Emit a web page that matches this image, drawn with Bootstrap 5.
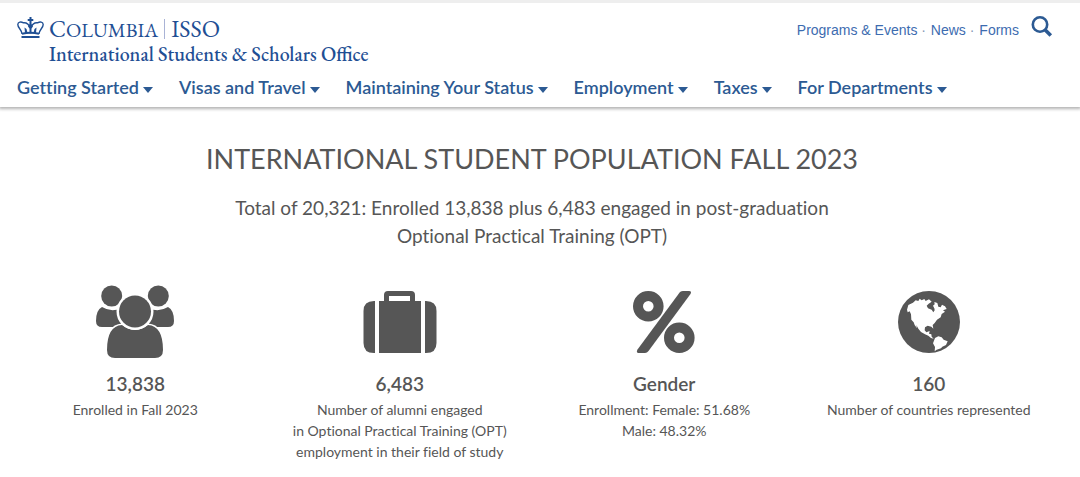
<!DOCTYPE html>
<html lang="en">
<head>
<meta charset="utf-8">
<meta name="viewport" content="width=device-width, initial-scale=1">
<title>International Student Population | Columbia ISSO</title>
<link href="https://cdn.jsdelivr.net/npm/bootstrap@5.3.0/dist/css/bootstrap.min.css" rel="stylesheet">
<style>
  body { font-family: Lato, Roboto, sans-serif; color: #565656; background: #fff; }
  .main-nav .dropdown-toggle, .population { font-variant-ligatures: none; }
  .site-header { border-top: 3px solid #eee; background: #fff; box-shadow: 0 1px 3px 1px rgba(0, 0, 0, .3); padding: 13px 27px 8px 17px; }
  .brand { color: #1f4f94; font-family: "EB Garamond", "Liberation Serif", serif; gap: 5px; }
  .brand:hover { color: #1f4f94; }
  .brand-name { font-size: 24px; line-height: 26px; }
  .brand-name .caps { font-size: 20px; }
  .brand-name .unit { border-left: 1px solid #a9b3d6; margin-left: 6px; padding-left: 6px; line-height: 20px; }
  .brand-office { font-size: 20px; line-height: 22px; font-weight: 500; }
  .utility { font-family: "Liberation Sans", sans-serif; font-size: 14px; line-height: 20px; color: #8797b5; }
  .utility nav { padding-top: 4px; }
  .utility a { color: #3d6cb0; text-decoration: none; }
  .utility a + a { margin-left: 1px; }
  .search-btn { margin-left: 12px; line-height: 0; }
  .main-nav { gap: 2px 26px; margin-top: 10px; }
  .main-nav .dropdown-toggle { color: #2c5a93; font-size: 18px; font-weight: 600; line-height: 24px; border: 0; background: none; padding: 0; }
  .main-nav .dropdown-toggle::after { border-top: 6px solid; border-left: 5px solid transparent; border-right: 5px solid transparent; margin-left: 4px; vertical-align: 1px; }
  .population { padding: 36px 19px 16px 3px; }
  .population h1 { font-size: 27px; line-height: 32px; font-weight: 400; margin-bottom: 19px; }
  .total { font-size: 19px; line-height: 28px; max-width: 640px; margin-bottom: 35px; }
  .stat-icon { fill: #565656; margin-bottom: 13px; }
  .stat-value { font-size: 19px; line-height: 24px; font-weight: 600; margin-bottom: 3px; }
  .stat-text { font-size: 14px; line-height: 21px; margin-bottom: 0; }
</style>
</head>
<body>
<header class="site-header position-relative">
  <div class="d-flex flex-wrap justify-content-between align-items-start">
    <a class="brand d-flex text-decoration-none" href="#">
      <svg width="27" height="24" viewBox="0 0 27 24" aria-hidden="true" fill="none" stroke="#1f4f94">
        <path d="M5 18C4.500 13 .8 12 .8 8.500C1 5.700 4 5.600 6.500 6.800C9.500 6.500 12 8.500 13.500 12C15 8.500 17.500 6.500 20.500 6.800C23 5.600 26 5.700 26.200 8.500C26.200 12 22.500 13 22 18" stroke-width="1.400"/>
        <path d="M5 17.800Q13.500 15.800 22 17.800" stroke-width="2"/>
        <path d="M4.500 21h18" stroke-width="2"/>
        <path d="M12.500 1h2v2h1.800v2h-1.800v3l1.500 2.600-1.500 1.800v5h-2v-5l-1.500-1.800 1.500-2.600V5h-1.800V3h1.800zM7.500 11.500l2 1.500 1 4H8zM19.500 11.500l-2 1.500-1 4H19z" fill="#1f4f94" stroke="none"/>
      </svg>
      <span class="d-flex flex-column">
        <span class="brand-name d-flex align-items-baseline"><span>C<span class="caps">OLUMBIA</span></span><span class="unit">ISSO</span></span>
        <span class="brand-office">International Students &amp; Scholars Office</span>
      </span>
    </a>
    <div class="utility d-flex align-items-start">
      <nav aria-label="Utility"><a href="#">Programs &amp; Events</a> · <a href="#">News</a> · <a href="#">Forms</a></nav>
      <button class="btn p-0 border-0 search-btn" type="button" aria-label="Search">
        <svg width="22" height="22" viewBox="0 0 22 22" fill="none" stroke="#2c5a93"><circle cx="9" cy="8.500" r="7.200" stroke-width="2.600"/><path d="M13.800 13.500l6 6" stroke-width="3.600"/></svg>
      </button>
    </div>
  </div>
  <nav class="main-nav d-flex flex-wrap" aria-label="Main">
    <button class="dropdown-toggle" type="button">Getting Started</button>
    <button class="dropdown-toggle" type="button">Visas and Travel</button>
    <button class="dropdown-toggle" type="button">Maintaining Your Status</button>
    <button class="dropdown-toggle" type="button">Employment</button>
    <button class="dropdown-toggle" type="button">Taxes</button>
    <button class="dropdown-toggle" type="button">For Departments</button>
  </nav>
</header>
<main class="population text-center">
  <h1>INTERNATIONAL STUDENT POPULATION FALL 2023</h1>
  <p class="total mx-auto">Total of 20,321: Enrolled 13,838 plus 6,483 engaged in post-graduation Optional Practical Training (OPT)</p>
  <div class="row g-0 row-cols-2 row-cols-md-4">
    <section class="col">
      <svg class="stat-icon" width="80" height="74" viewBox="0 0 80 74" aria-hidden="true">
        <circle cx="16.700" cy="11" r="10.500"/><circle cx="63.300" cy="11" r="10.500"/>
        <path d="M7 22Q17 28 26 23V42H7Q1 42 1 36Q1 25 7 22ZM73 22Q63 28 54 23V42H73Q79 42 79 36Q79 25 73 22Z"/>
        <path d="M27 40Q40 50 53 40Q68 41 68 65Q68 73 60 73H20Q12 73 12 65Q12 41 27 40Z" stroke="#fff" stroke-width="3" paint-order="stroke"/>
        <circle cx="40" cy="26.500" r="16" stroke="#fff" stroke-width="5" paint-order="stroke"/>
      </svg>
      <h2 class="stat-value">13,838</h2>
      <p class="stat-text">Enrolled in Fall 2023</p>
    </section>
    <section class="col">
      <svg class="stat-icon" width="80" height="74" viewBox="0 0 80 74" aria-hidden="true">
        <path d="M14 16h1v52h-1Q3.500 68 3.500 58V26Q3.500 16 14 16ZM66 16h-1v52h1Q76.500 68 76.500 58V26Q76.500 16 66 16Z"/>
        <path fill-rule="evenodd" d="M19 16h5V10q0-4 4-4h23q4 0 4 4v6h6v52H19zM29 11v5h21v-5z"/>
      </svg>
      <h2 class="stat-value">6,483</h2>
      <p class="stat-text">Number of alumni engaged<br>in Optional Practical Training (OPT)<br>employment in their field of study</p>
    </section>
    <section class="col">
      <svg class="stat-icon" width="80" height="74" viewBox="0 0 80 74" aria-hidden="true">
        <g fill="none" stroke="#565656" stroke-width="10"><circle cx="24.300" cy="21.300" r="10.300"/><circle cx="55.300" cy="52.700" r="10.300"/></g>
        <path d="M56 7Q57.500 6 59 6H65Q68 6 66.500 9L24.500 66Q23 68 21 68H14Q12 67.500 13.500 64.500Z"/>
      </svg>
      <h2 class="stat-value">Gender</h2>
      <p class="stat-text">Enrollment: Female: 51.68%<br>Male: 48.32%</p>
    </section>
    <section class="col">
      <svg class="stat-icon" width="80" height="74" viewBox="0 0 240 222" aria-hidden="true">
        <circle cx="120" cy="111" r="93"/>
        <g fill="#fff" transform="translate(0 -8)">
          <path d="M54 82L58 68 72 61 80 54 88 56 92 49 98 54 106 50 110 56 120 51 128 58 119 64 113 70 117 78 128 82 133 90 137 84 136 78 132 70 137 66 136 59 145 62 148 73 155 75 159 67 168 72 173 80 162 84 168 88 158 95 155 105 144 112 137 122 131 128 133 139 127 133 116 130 108 135 107 144 112 150 122 146 120 154 127 156 128 163 134 169 126 167 118 160 108 156 96 149 88 139 82 128 84 138 77 128 74 120 67 112 66 96 62 87 56 90Z"/>
          <path d="M138 167L148 162 158 165 164 172 176 177 171 188 160 193 156 198 143 202 137 207 138 194 132 183Z"/>
        </g>
      </svg>
      <h2 class="stat-value">160</h2>
      <p class="stat-text">Number of countries represented</p>
    </section>
  </div>
</main>
<script src="https://cdn.jsdelivr.net/npm/bootstrap@5.3.0/dist/js/bootstrap.bundle.min.js"></script>
</body>
</html>
